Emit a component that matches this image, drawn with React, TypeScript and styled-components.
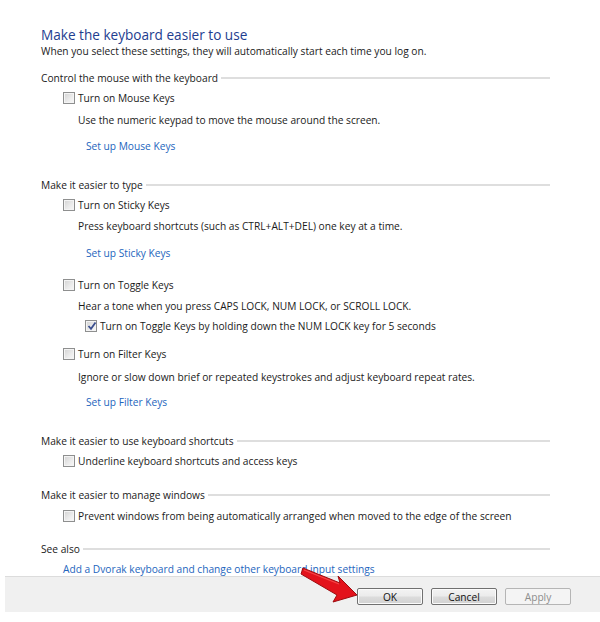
import React from 'react';
import styled, { createGlobalStyle } from 'styled-components';

const GlobalStyle = createGlobalStyle`
  html, body {
    margin: 0;
    padding: 0;
    background: #fff;
  }
  body {
    font-family: "Open Sans", "Liberation Sans", sans-serif;
    font-size: 10.2px;
    color: #1a1a1a;
  }
`;

const Window = styled.div`
  position: relative;
  width: 600px;
  height: 622px;
  display: flex;
  flex-direction: column;
  background: #fff;
  overflow: hidden;
`;

const Content = styled.div`
  display: flex;
  flex-direction: column;
  padding: 27px 50px 0 41px;
`;

const Title = styled.h1`
  margin: 0;
  font-size: 13.6px;
  font-weight: 400;
  line-height: 16px;
  color: #1e3d8f;
`;

const Subtitle = styled.p`
  margin: 1px 0 0;
  line-height: 14px;
`;

const Section = styled.div<{ $top: number }>`
  display: flex;
  flex-direction: column;
  margin-top: ${p => p.$top}px;
`;

const SectionHeader = styled.div`
  display: flex;
  align-items: center;
  gap: 3px;
  line-height: 14px;
  white-space: nowrap;

  &::after {
    content: '';
    flex: 1;
    height: 2px;
    background: #dedede;
  }
`;

const Line = styled.div<{ $top?: number; $indent: number }>`
  display: flex;
  align-items: center;
  line-height: 14px;
  height: 14px;
  margin-top: ${p => p.$top ?? 0}px;
  padding-left: ${p => p.$indent}px;
  white-space: nowrap;
`;

const Box = styled.span`
  position: relative;
  box-sizing: border-box;
  width: 12px;
  height: 12px;
  margin-right: 3px;
  border: 1px solid #8e8f8f;
  background: linear-gradient(135deg, #d2d2d2 0%, #ececec 60%, #f8f8f8 100%);
  box-shadow: inset 0 0 0 1px #f4f4f4;
  flex: none;
`;

const Check = styled.svg`
  position: absolute;
  left: 1px;
  top: 0px;
`;

const Link = styled.a`
  color: #2465bd;
  text-decoration: none;
  cursor: pointer;
`;

const BottomBar = styled.div`
  display: flex;
  justify-content: flex-end;
  align-items: flex-start;
  gap: 8px;
  margin: 0 0 0 5px;
  height: 36px;
  box-sizing: border-box;
  padding: 11px 29px 0 0;
  background: #f0f0f0;
  border-top: 1px solid #dcdcdc;
`;

const Button = styled.button<{ $disabled?: boolean }>`
  width: 66px;
  height: 17px;
  padding: 0;
  box-sizing: border-box;
  font-family: inherit;
  font-size: 10.2px;
  line-height: 14px;
  border-radius: 2px;
  border: 1px solid ${p => (p.$disabled ? '#b5b5b5' : '#707070')};
  color: ${p => (p.$disabled ? '#8d8d8d' : '#111')};
  background: ${p =>
    p.$disabled
      ? '#f4f4f4'
      : 'linear-gradient(#f3f3f3 0%, #ebebeb 48%, #dcdcdc 52%, #d2d2d2 100%)'};
  box-shadow: inset 0 0 0 1px ${p => (p.$disabled ? '#f4f4f4' : '#fbfbfb')};
`;

const Arrow = styled.svg`
  position: absolute;
  left: 299px;
  top: 565px;
`;

function Checkbox({ checked }: { checked?: boolean }) {
  return (
    <Box>
      {checked && (
        <Check width="10" height="10" viewBox="0 0 10 10">
          <path d="M1.5 5 L4 7.8 L8.5 1.5" fill="none" stroke="#3b4f8f" strokeWidth="1.8" />
        </Check>
      )}
    </Box>
  );
}

export default function App() {
  return (
    <Window>
      <GlobalStyle />
      <Content>
        <Title>Make the keyboard easier to use</Title>
        <Subtitle>When you select these settings, they will automatically start each time you log on.</Subtitle>

        <Section $top={13}>
          <SectionHeader>Control the mouse with the keyboard</SectionHeader>
          <Line $top={6} $indent={22}><Checkbox />Turn on Mouse Keys</Line>
          <Line $top={8} $indent={37}>Use the numeric keypad to move the mouse around the screen.</Line>
          <Line $top={12} $indent={45}><Link>Set up Mouse Keys</Link></Line>
        </Section>

        <Section $top={25}>
          <SectionHeader>Make it easier to type</SectionHeader>
          <Line $top={6} $indent={22}><Checkbox />Turn on Sticky Keys</Line>
          <Line $top={7} $indent={37}>Press keyboard shortcuts (such as CTRL+ALT+DEL) one key at a time.</Line>
          <Line $top={13} $indent={45}><Link>Set up Sticky Keys</Link></Line>
          <Line $top={18} $indent={22}><Checkbox />Turn on Toggle Keys</Line>
          <Line $top={7} $indent={37}>Hear a tone when you press CAPS LOCK, NUM LOCK, or SCROLL LOCK.</Line>
          <Line $top={6} $indent={44}><Checkbox checked />Turn on Toggle Keys by holding down the NUM LOCK key for 5 seconds</Line>
          <Line $top={14} $indent={22}><Checkbox />Turn on Filter Keys</Line>
          <Line $top={9} $indent={37}>Ignore or slow down brief or repeated keystrokes and adjust keyboard repeat rates.</Line>
          <Line $top={11} $indent={45}><Link>Set up Filter Keys</Link></Line>
        </Section>

        <Section $top={25}>
          <SectionHeader>Make it easier to use keyboard shortcuts</SectionHeader>
          <Line $top={6} $indent={22}><Checkbox />Underline keyboard shortcuts and access keys</Line>
        </Section>

        <Section $top={20}>
          <SectionHeader>Make it easier to manage windows</SectionHeader>
          <Line $top={7} $indent={22}><Checkbox />Prevent windows from being automatically arranged when moved to the edge of the screen</Line>
        </Section>

        <Section $top={19}>
          <SectionHeader>See also</SectionHeader>
          <Line $top={6} $indent={22}><Link>Add a Dvorak keyboard and change other keyboard input settings</Link></Line>
        </Section>
      </Content>

      <BottomBar>
        <Button>OK</Button>
        <Button>Cancel</Button>
        <Button $disabled>Apply</Button>
      </BottomBar>

      <Arrow width="64" height="42" viewBox="0 0 64 42">
        <path
          d="M4 3 L41 18 L39 11 L58 30 L34 37 L38 30 L2 9 Z"
          fill="#e3121b"
          stroke="#9c0c10"
          strokeWidth="1"
          strokeLinejoin="round"
        />
        <path d="M5 5 L40 19" stroke="#ff5a5a" strokeWidth="1.2" opacity="0.7" />
      </Arrow>
    </Window>
  );
}
